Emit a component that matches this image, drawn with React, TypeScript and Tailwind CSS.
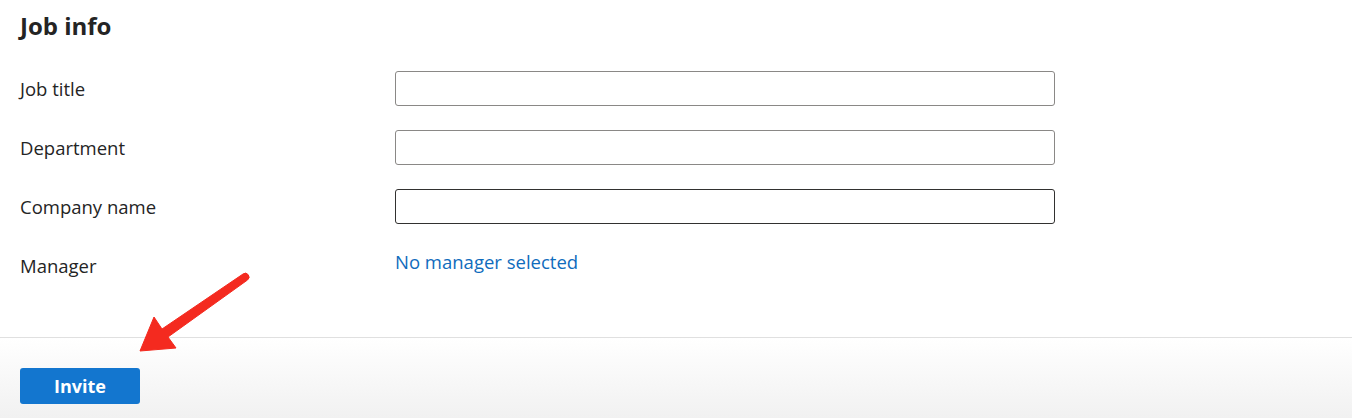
import React from 'react';

const fields = ['Job title', 'Department', 'Company name'];

function Arrow() {
  return (
    <svg className="absolute left-0 top-0 pointer-events-none" width="300" height="418" viewBox="0 0 300 418">
      <path
        d="M140 351 L154 317 L162 329 L243 274 A3.6 3.6 0 0 1 247.5 280 L168 337 L176 348 Z"
        fill="#f42a1f"
        stroke="#f42a1f"
        strokeWidth="1"
        strokeLinejoin="round"
      />
    </svg>
  );
}

export default function App() {
  return (
    <div className="relative w-[1352px] h-[418px] bg-white overflow-hidden text-[#242424]" style={{ fontFamily: '"Open Sans", "Noto Sans", sans-serif' }}>
      <div className="h-[337px] px-5 pt-[10px]">
        <h2 className="text-[24px] font-bold leading-[32px]">Job info</h2>

        <div className="mt-[29px] flex flex-col gap-6">
          {fields.map((f, i) => (
            <div key={f} className="flex items-center">
              <label className="w-[375px] text-[18.5px] pt-[1px]">{f}</label>
              <input
                className={
                  'w-[660px] h-[35px] rounded-[3px] bg-white border outline-none px-2 ' +
                  (i === 2 ? 'border-[#323130]' : 'border-[#8a8886]')
                }
              />
            </div>
          ))}
          <div className="flex items-start">
            <span className="w-[375px] text-[18.5px] pt-[4px]">Manager</span>
            <a className="text-[18.5px] text-[#0f6cbd] leading-[28px]">No manager selected</a>
          </div>
        </div>
      </div>

      <div className="h-[81px] border-t border-[#e0e0e0] bg-gradient-to-b from-white to-[#f1f1f1] px-5 pt-[30px]">
        <button className="w-[120px] h-[36px] rounded-[3px] bg-[#1376cf] text-white font-bold text-[18px]">
          Invite
        </button>
      </div>

      <Arrow />
    </div>
  );
}
